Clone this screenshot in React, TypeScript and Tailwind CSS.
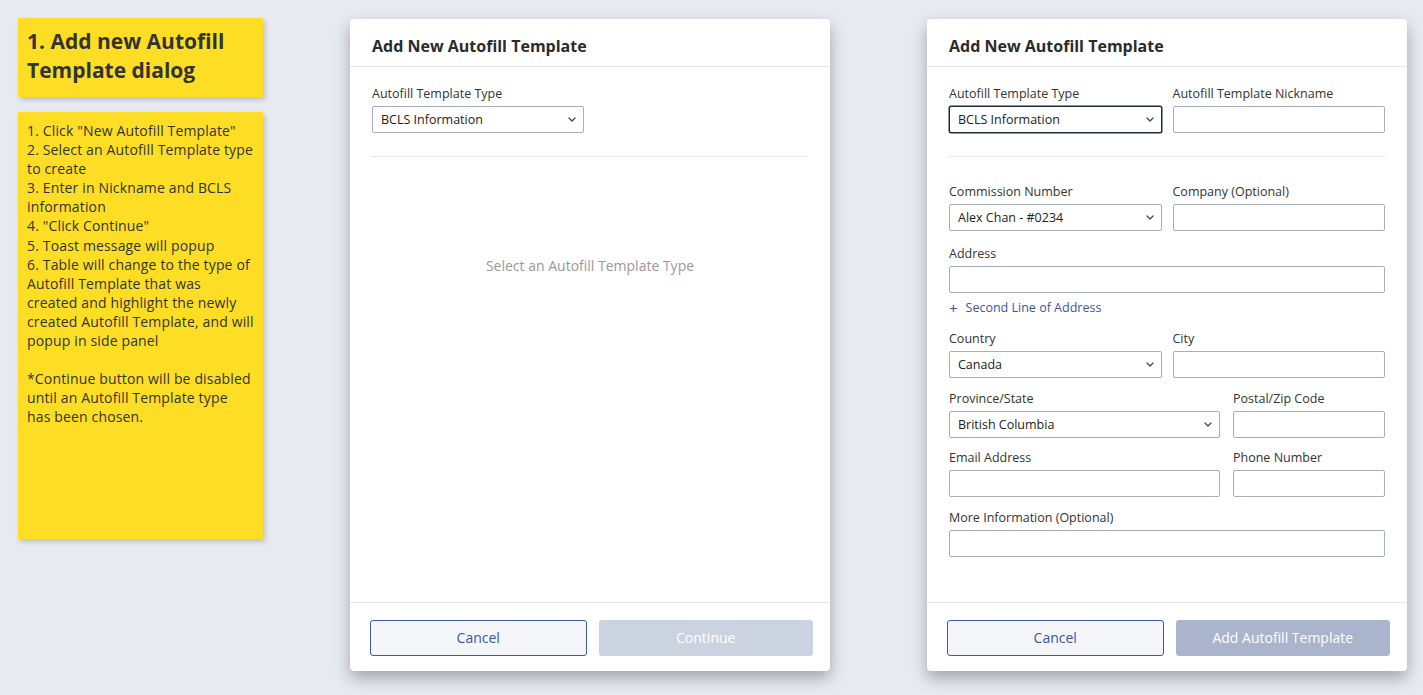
import React from "react";

const font = { fontFamily: '"Open Sans", "Noto Sans", sans-serif' };

function Chevron() {
  return (
    <svg width="8" height="5" viewBox="0 0 8 5" className="shrink-0">
      <path d="M1 1l3 3 3-3" fill="none" stroke="#444" strokeWidth="1.3" strokeLinecap="round" strokeLinejoin="round" />
    </svg>
  );
}

function Label({ children }: { children: React.ReactNode }) {
  return <div className="mb-[4px] text-[12.5px] leading-[17px] text-[#333]">{children}</div>;
}

function Select({ value, focused }: { value: string; focused?: boolean }) {
  return (
    <div
      className={
        "flex h-[27px] items-center justify-between rounded-[2px] border bg-white pl-[8px] pr-[7px] text-[12.5px] text-[#222] " +
        (focused ? "border-[#1f2a3c] shadow-[0_0_0_0.5px_#1f2a3c]" : "border-[#a7afbc]")
      }
    >
      <span className="pt-[2px]">{value}</span>
      <Chevron />
    </div>
  );
}

function Input() {
  return <div className="h-[27px] rounded-[2px] border border-[#a7afbc] bg-white" />;
}

function Field({ label, select, focused }: { label: string; select?: string; focused?: boolean }) {
  return (
    <div className="min-w-0 flex-1">
      <Label>{label}</Label>
      {select ? <Select value={select} focused={focused} /> : <Input />}
    </div>
  );
}

function Dialog({ children, primary, primaryClass }: { children: React.ReactNode; primary: string; primaryClass: string }) {
  return (
    <div className="flex h-[652px] w-[480px] flex-col rounded-[4px] bg-white shadow-[0_7px_16px_rgba(0,0,0,0.3)]">
      <div className="flex h-[48px] items-center border-b border-[#e3e5e9] px-[22px] pt-[6px]">
        <h2 className="text-[16px] font-bold text-[#2b2b2b]">Add New Autofill Template</h2>
      </div>
      <div className="flex flex-1 flex-col px-[22px] pt-[18px]">{children}</div>
      <div className="flex gap-[12px] border-t border-[#e3e5e9] pb-[15px] pl-[20px] pr-[17px] pt-[17px]">
        <button className="h-[36px] flex-1 rounded-[3px] border border-[#3f5aa8] bg-[#f4f6fa] pb-[2px] text-[14px] text-[#3a55a4]">
          Cancel
        </button>
        <button className={"h-[36px] flex-1 rounded-[3px] pb-[2px] text-[14px] text-white " + primaryClass}>{primary}</button>
      </div>
    </div>
  );
}

export default function App() {
  return (
    <div className="min-h-[695px] w-full bg-[#e7eaf1] text-[#333]" style={font}>
      <div className="flex items-start pl-[18px] pt-[18px]">
        <div className="flex w-[245px] shrink-0 flex-col gap-[15px]">
          <div className="h-[79px] bg-[#fede25] px-[9px] pt-[9px] shadow-[2px_3px_5px_rgba(0,0,0,0.18)]">
            <h1 className="text-[21px] font-bold leading-[29px] text-[#333]">1. Add new Autofill Template dialog</h1>
          </div>
          <div className="h-[427px] bg-[#fede25] px-[9px] pt-[9px] text-[14px] leading-[19.1px] tracking-[0.15px] text-[#333] shadow-[2px_3px_5px_rgba(0,0,0,0.18)]">
            <p>1. Click "New Autofill Template"</p>
            <p>2. Select an Autofill Template type to create</p>
            <p>3. Enter in Nickname and BCLS information</p>
            <p>4. "Click Continue"</p>
            <p>5. Toast message will popup</p>
            <p>
              6. Table will change to the type of Autofill Template that was created and highlight the newly created
              Autofill Template, and will popup in side panel
            </p>
            <p className="mt-[19px]">*Continue button will be disabled until an Autofill Template type has been chosen.</p>
          </div>
        </div>

        <div className="ml-[87px] mt-[1px]">
          <Dialog primary="Continue" primaryClass="bg-[#ccd3e0]">
            <div className="w-[212px]">
              <Field label="Autofill Template Type" select="BCLS Information" />
            </div>
            <div className="mt-[23px] border-t border-[#e3e5e9]" />
            <div className="flex flex-1 items-start justify-center pt-[98px] text-[14px] text-[#999]">
              Select an Autofill Template Type
            </div>
          </Dialog>
        </div>

        <div className="ml-[97px] mt-[1px]">
          <Dialog primary="Add Autofill Template" primaryClass="bg-[#aab5cd]">
            <div className="flex gap-[11px]">
              <Field label="Autofill Template Type" select="BCLS Information" focused />
              <Field label="Autofill Template Nickname" />
            </div>
            <div className="mb-[26px] mt-[23px] border-t border-[#e3e5e9]" />
            <div className="flex flex-col">
              <div className="flex gap-[11px]">
                <Field label="Commission Number" select="Alex Chan - #0234" />
                <Field label="Company (Optional)" />
              </div>
              <div className="mt-[14px]">
                <Field label="Address" />
                <div className="mt-[6px] flex items-center gap-[8px] text-[12.5px] text-[#3a55a4]">
                  <span className="text-[15px] leading-[17px]">+</span>
                  <span>Second Line of Address</span>
                </div>
              </div>
              <div className="mt-[12px] flex gap-[11px]">
                <Field label="Country" select="Canada" />
                <Field label="City" />
              </div>
              <div className="mt-[12px] flex gap-[13px]">
                <div className="w-[271px]">
                  <Field label="Province/State" select="British Columbia" />
                </div>
                <Field label="Postal/Zip Code" />
              </div>
              <div className="mt-[11px] flex gap-[13px]">
                <div className="w-[271px]">
                  <Field label="Email Address" />
                </div>
                <Field label="Phone Number" />
              </div>
              <div className="mt-[12px]">
                <Field label="More Information (Optional)" />
              </div>
            </div>
          </Dialog>
        </div>
      </div>
    </div>
  );
}
